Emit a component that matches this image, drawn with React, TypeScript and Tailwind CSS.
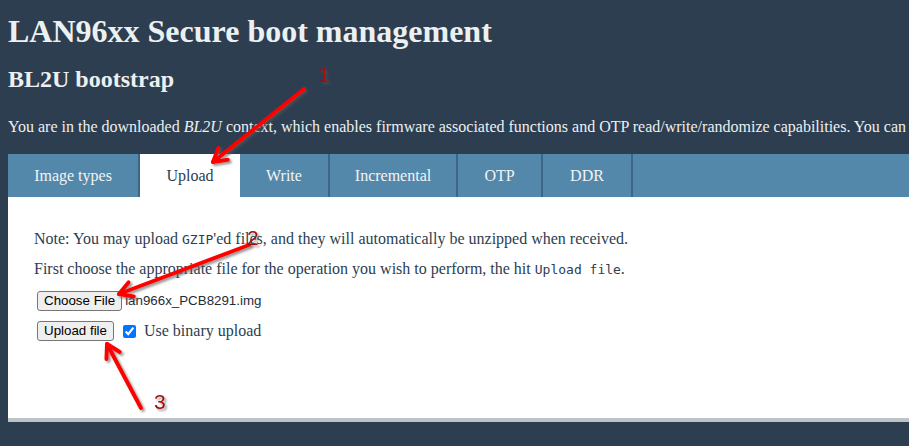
type Pt = [number, number];

function Arrow({ from, to }: { from: Pt; to: Pt }) {
  const dx = to[0] - from[0];
  const dy = to[1] - from[1];
  const len = Math.hypot(dx, dy);
  const bx = -dx / len;
  const by = -dy / len;
  const arm = 15;
  const rot = (a: number): Pt => {
    const c = Math.cos(a);
    const s = Math.sin(a);
    return [to[0] + (c * bx - s * by) * arm, to[1] + (s * bx + c * by) * arm];
  };
  const a1 = rot(Math.PI / 6);
  const a2 = rot(-Math.PI / 6);
  return (
    <g filter="url(#shadow)" stroke="#ff0000" strokeWidth={4} strokeLinecap="round" strokeLinejoin="round" fill="none">
      <line x1={from[0]} y1={from[1]} x2={to[0]} y2={to[1]} />
      <polyline points={`${a1[0]},${a1[1]} ${to[0]},${to[1]} ${a2[0]},${a2[1]}`} />
    </g>
  );
}

const tabs = [
  { label: "Image types", w: "w-[130px]", active: false },
  { label: "Upload", w: "w-[100px]", active: true },
  { label: "Write", w: "w-[88px]", active: false },
  { label: "Incremental", w: "w-[126px]", active: false },
  { label: "OTP", w: "w-[83px]", active: false },
  { label: "DDR", w: "w-[88px]", active: false },
];

export default function App() {
  return (
    <div className="relative w-[909px] h-[446px] overflow-hidden bg-[#2c3e50] text-[#ecf0f1] font-['Liberation_Serif',serif]">
      <div className="w-[1400px] px-[8px]">
        <h1 className="pt-[13px] text-[32px] leading-[36px] font-bold">LAN96xx Secure boot management</h1>
        <h2 className="mt-[16px] text-[24px] leading-[28px] font-bold">BL2U bootstrap</h2>
        <p className="mt-[24px] text-[16px] leading-[20px] whitespace-nowrap">
          You are in the downloaded <em>BL2U</em> context, which enables firmware associated functions and OTP
          read/write/randomize capabilities. You can also reboot the board from here once you are done.
        </p>

        <div className="mt-[17px] flex h-[43px] bg-[#5388aa]">
          {tabs.map((t) => (
            <div
              key={t.label}
              className={
                t.active
                  ? `${t.w} flex items-center justify-center bg-white text-[#2c3e50] text-[16px]`
                  : `${t.w} flex items-center justify-center border-r-2 border-[#3c6683] text-[#f2f4f5] text-[16px] box-content`
              }
            >
              {t.label}
            </div>
          ))}
        </div>

        <div className="h-[225px] bg-white border-b-4 border-[#bdc3c7] pt-[32px] px-[26px] text-[#2c3e50] text-[16px] leading-[20px] flex flex-col items-start">
          <p className="whitespace-nowrap">
            Note: You may upload <code className="font-['DejaVu_Sans_Mono',monospace] text-[13px]">GZIP</code>'ed files,
            and they will automatically be unzipped when received.
          </p>
          <p className="mt-[9px] whitespace-nowrap">
            First choose the appropriate file for the operation you wish to perform, the hit{" "}
            <code className="font-['DejaVu_Sans_Mono',monospace] text-[13px]">Upload file</code>.
          </p>
          <div className="mt-[11px] ml-[3px] flex items-center gap-[3px] font-['Liberation_Sans',Arial,sans-serif] text-[13.33px] leading-[16px] text-black">
            <button className="h-[20px] px-[6px] bg-[#efefef] border border-[#767676] rounded-[3px]">Choose File</button>
            <span className="text-[#1f2d3a]">lan966x_PCB8291.img</span>
          </div>
          <div className="mt-[10px] ml-[3px] flex items-center">
            <button className="h-[20px] px-[6px] bg-[#efefef] border border-[#767676] rounded-[3px] font-['Liberation_Sans',Arial,sans-serif] text-[13.33px] leading-[16px] text-black">
              Upload file
            </button>
            <input type="checkbox" defaultChecked className="ml-[9px] mr-[8px] w-[13px] h-[13px] accent-[#0075ff]" />
            <span>Use binary upload</span>
          </div>
        </div>
      </div>

      <svg className="absolute inset-0 pointer-events-none" width="909" height="446" viewBox="0 0 909 446">
        <defs>
          <filter id="shadow" x="-20%" y="-20%" width="140%" height="140%">
            <feDropShadow dx="2" dy="2" stdDeviation="1.2" floodColor="#555" floodOpacity="0.6" />
          </filter>
        </defs>
        <Arrow from={[304, 89]} to={[213, 162]} />
        <Arrow from={[249, 245]} to={[119, 294]} />
        <Arrow from={[141, 408]} to={[107, 344]} />
        <g fill="#a50d0d" fontFamily="'Liberation Sans', Arial, sans-serif" fontSize="21" filter="url(#shadow)">
          <text x="318" y="82">1</text>
          <text x="247" y="245">2</text>
          <text x="154" y="409">3</text>
        </g>
      </svg>
    </div>
  );
}
